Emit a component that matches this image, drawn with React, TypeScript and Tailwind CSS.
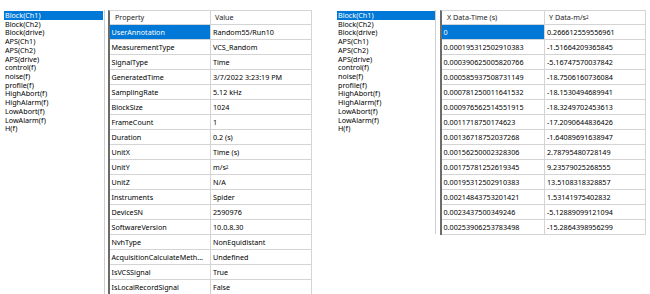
import React from 'react';

const signals = [
  'Block(Ch1)',
  'Block(Ch2)',
  'Block(drive)',
  'APS(Ch1)',
  'APS(Ch2)',
  'APS(drive)',
  'control(f)',
  'noise(f)',
  'profile(f)',
  'HighAbort(f)',
  'HighAlarm(f)',
  'LowAbort(f)',
  'LowAlarm(f)',
  'H(f)',
];

const properties: [string, React.ReactNode][] = [
  ['UserAnnotation', 'Random55/Run10'],
  ['MeasurementType', 'VCS_Random'],
  ['SignalType', 'Time'],
  ['GeneratedTime', '3/7/2022 3:23:19 PM'],
  ['SamplingRate', '5.12 kHz'],
  ['BlockSize', '1024'],
  ['FrameCount', '1'],
  ['Duration', '0.2 (s)'],
  ['UnitX', 'Time (s)'],
  [
    'UnitY',
    <>
      m/s<sup className="text-[4.5px] relative -top-[1px]">2</sup>
    </>,
  ],
  ['UnitZ', 'N/A'],
  ['Instruments', 'Spider'],
  ['DeviceSN', '2590976'],
  ['SoftwareVersion', '10.0.8.30'],
  ['NvhType', 'NonEquidistant'],
  ['AcquisitionCalculateMeth...', 'Undefined'],
  ['IsVCSSignal', 'True'],
  ['IsLocalRecordSignal', 'False'],
];

const points: [string, string][] = [
  ['0', '0.266612559556961'],
  ['0.000195312502910383', '-1.51664209365845'],
  ['0.000390625005820766', '-5.16747570037842'],
  ['0.000585937508731149', '-18.7506160736084'],
  ['0.000781250011641532', '-18.1530494689941'],
  ['0.000976562514551915', '-18.3249702453613'],
  ['0.0011718750174623', '-17.2090644836426'],
  ['0.00136718752037268', '-1.64089691638947'],
  ['0.00156250002328306', '2.78795480728149'],
  ['0.00175781252619345', '9.23579025268555'],
  ['0.00195312502910383', '13.5108318328857'],
  ['0.00214843753201421', '1.53141975402832'],
  ['0.0023437500349246', '-5.12889099121094'],
  ['0.00253906253783498', '-15.2864398956299'],
];

const SignalList = ({ className }: { className: string }) => (
  <div className={`shrink-0 self-start mt-[10px] border-r border-[#cfcfcf] pt-[1px] ${className}`}>
    {signals.map((name, i) => (
      <div
        key={name}
        className={`h-[8.73px] leading-[8.73px] pl-[1px] whitespace-nowrap ${
          i === 0 ? 'bg-[#0078d7] text-white' : 'text-black'
        }`}
      >
        {name}
      </div>
    ))}
  </div>
);

interface GridProps {
  headers: React.ReactNode[];
  rows: React.ReactNode[][];
  widths: string[];
}

const Grid: React.FC<GridProps> = ({ headers, rows, widths }) => (
  <div className="shrink-0 self-start mt-[10px] border-l-2 border-l-[#6b6b6b] border-t border-t-[#d4d4d4]">
    <div className="flex h-[14px] border-b border-[#d4d4d4]">
      {headers.map((h, i) => (
        <div
          key={i}
          className={`${widths[i]} border-r border-[#d4d4d4] leading-[13px] text-[#222] whitespace-nowrap ${
            i === 0 ? 'pl-[5px]' : 'pl-[4px]'
          }`}
        >
          {h}
        </div>
      ))}
    </div>
    {rows.map((row, r) => (
      <div key={r} className="flex h-[15px] border-b border-[#d4d4d4]">
        {row.map((cell, i) => (
          <div
            key={i}
            className={`${widths[i]} border-r border-[#d4d4d4] leading-[14px] whitespace-nowrap overflow-hidden ${
              i === 0 ? 'pl-[1.5px]' : 'pl-[2px]'
            } ${r === 0 && i === 0 ? 'bg-[#0078d7] text-white' : 'text-black'}`}
          >
            {cell}
          </div>
        ))}
      </div>
    ))}
  </div>
);

export default function App() {
  return (
    <div
      className="w-[650px] h-[294px] overflow-hidden bg-white flex text-[7.2px]"
      style={{ fontFamily: '"Noto Sans", "Open Sans", sans-serif' }}
    >
      <SignalList className="w-[105px] pl-[4px] pr-[1px] h-[284px]" />
      <div className="w-[3px] shrink-0" />
      <Grid
        headers={['Property', 'Value']}
        rows={properties.map(([k, v]) => [k, v])}
        widths={['w-[101px]', 'w-[101px]']}
      />
      <div className="w-[24px] shrink-0" />
      <SignalList className="w-[100px] pl-[1px] h-[224px]" />
      <div className="w-[4px] shrink-0" />
      <Grid
        headers={[
          'X Data-Time (s)',
          <>
            Y Data-m/s<sup className="text-[4.5px] relative -top-[1px]">2</sup>
          </>,
        ]}
        rows={points.map(([x, y]) => [x, y])}
        widths={['w-[103px]', 'w-[101px]']}
      />
    </div>
  );
}
